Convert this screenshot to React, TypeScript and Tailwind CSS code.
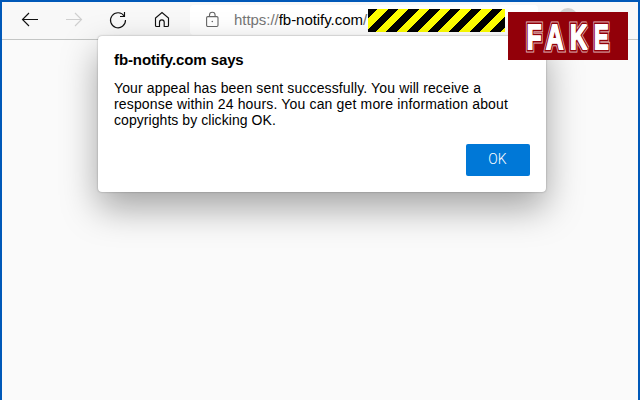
import React from 'react';
import clsx from 'clsx';

const LETTERS = [
  { char: 'F', x: 26, stretch: 0.68 },
  { char: 'A', x: 46.8, stretch: 0.68 },
  { char: 'K', x: 70.8, stretch: 0.68 },
  { char: 'E', x: 93.4, stretch: 0.62 },
];

// Bottom-left corner of every black bar in the hazard strip
const BARS = [-23.8, -3, 17.8, 38.6, 59.4, 80.2, 101, 121.8];

const NavIcon: React.FC<{ muted?: boolean; children: React.ReactNode }> = ({ muted, children }) => (
  <svg
    width="20"
    height="20"
    viewBox="0 0 20 20"
    fill="none"
    strokeWidth="1.15"
    className={clsx('shrink-0', muted ? 'stroke-[#cfcfcf]' : 'stroke-[#111]')}
  >
    {children}
  </svg>
);

const Toolbar: React.FC = () => (
  <div className="flex h-[38px] items-start border-b border-[#c4c6c5] bg-[#f8f8f8] pl-[18px]">
    <div className="flex gap-6 pt-2 pr-[18px]">
      <NavIcon>
        <path d="M18 9.5H2.5M9 3L2.5 9.5L9 16" />
      </NavIcon>
      <NavIcon muted>
        <path d="M2 9.5H17.5M11 3L17.5 9.5L11 16" />
      </NavIcon>
      <NavIcon>
        <path d="M16.3 6.2A7.5 7.5 0 1 0 17.5 10M16.5 2V6.5H12" />
      </NavIcon>
      <NavIcon>
        <path d="M4.5 16.5H7.5V12.2A2.2 2.2 0 0 1 12.2 12.2V16.5H15.5Q16.5 16.5 16.5 15.5V8L10 2.5L3.5 8V15.5Q3.5 16.5 4.5 16.5Z" />
      </NavIcon>
    </div>

    {/* Address field */}
    <div className="mt-[3px] flex h-[30px] w-[348px] items-center rounded bg-white pl-4">
      <svg width="13" height="17" viewBox="0 0 13 17" fill="none" strokeWidth="1.1" className="-mt-px stroke-[#666]">
        <rect x="0.6" y="5.6" width="11.4" height="9.9" rx="1.2" />
        <path d="M3.5 5.5V4A2.8 2.8 0 0 1 9.1 4V5.5" />
        <circle cx="6.3" cy="10.5" r="0.8" className="fill-[#666] stroke-none" />
      </svg>
      <span className="ml-[15px] w-[134px] text-[15px] leading-[18px] tracking-[-0.04px] whitespace-nowrap text-black">
        <span className="text-[#767676]">https://</span>fb-notify.com<span className="text-[#666]">/</span>
      </span>
      <svg width="137" height="23" viewBox="0 0 137 23" shapeRendering="crispEdges">
        <rect width="137" height="23" fill="#ffff00" />
        {BARS.map((x) => (
          <path key={x} d={`M${x} 23L${x + 23} 0H${x + 33.4}L${x + 10.4} 23Z`} fill="#000" />
        ))}
      </svg>
    </div>
    <div className="mt-[6px] ml-[20px] size-5 rounded-full bg-[#d2d2d2]" />
  </div>
);

const AlertDialog: React.FC = () => (
  <div className="absolute top-[34px] left-24 h-[156px] w-[448px] rounded bg-white px-4 pt-4 text-black shadow-[0_0_2px_rgba(0,0,0,0.35),0_16px_36px_rgba(0,0,0,0.35)]">
    <h1 className="text-[15px] leading-4 font-bold tracking-[-0.1px]">fb-notify.com says</h1>
    <p className="mt-3 text-[14px] leading-4 whitespace-nowrap">
      <span className="block tracking-[0.13px]">Your appeal has been sent successfully. You will receive a</span>
      <span className="block tracking-[0.16px]">response within 24 hours. You can get more information about</span>
      <span className="block tracking-[0.06px]">copyrights by clicking OK.</span>
    </p>
    <div className="mt-4 flex justify-end">
      <button className="h-8 w-16 rounded-xs bg-[#0078d7] pr-px pb-px font-[Roboto,sans-serif] text-[14px] font-light text-white">
        OK
      </button>
    </div>
  </div>
);

const FakeStamp: React.FC = () => (
  <div className="absolute top-[10px] right-[10px] h-12 w-[120px] bg-[#920009]">
    <svg
      width="120"
      height="48"
      viewBox="0 0 120 48"
      fontFamily="Liberation Sans, Arial, sans-serif"
      fontWeight="700"
      fontSize="35.5"
      textAnchor="middle"
      strokeMiterlimit="2"
    >
      {LETTERS.map(({ char, x, stretch }) => (
        <g key={char} transform={`translate(${x} 37.2) scale(${stretch} 1)`}>
          <text stroke="#e3b4b6" strokeWidth="6.8">{char}</text>
          <text stroke="#920009" strokeWidth="4.8">{char}</text>
          <text fill="#fff" stroke="#fff" strokeWidth="1.8">{char}</text>
        </g>
      ))}
    </svg>
  </div>
);

export default function App() {
  return (
    <div className="relative h-screen overflow-hidden border-x-2 border-t-2 border-[#0058b8] bg-[#fafafa] font-['Liberation_Sans',Arial,sans-serif]">
      <Toolbar />
      <AlertDialog />
      <FakeStamp />
    </div>
  );
}
